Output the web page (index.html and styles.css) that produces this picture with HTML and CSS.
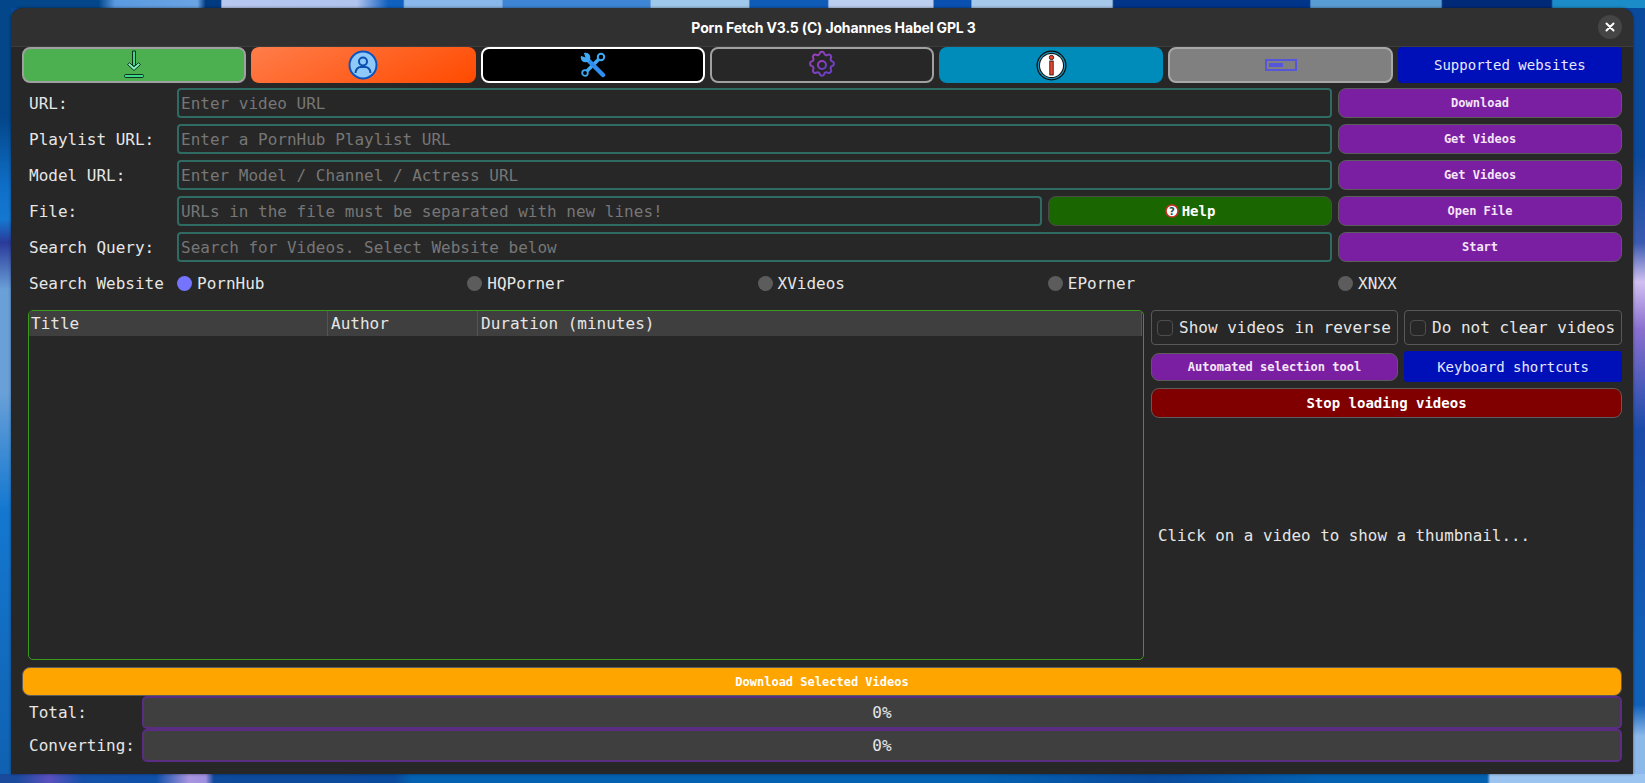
FILE: index.html

```html
<!DOCTYPE html>
<html lang="en">
<head>
    <meta charset="UTF-8">
    <title>Porn Fetch</title>
    <link rel="stylesheet" href="styles.css">
</head>
<body>
    <div class="window">
        <div class="titlebar">
            <span class="title">Porn Fetch V3.5 (C) Johannes Habel GPL 3</span>
            <span class="close">
                <svg width="10" height="10" viewBox="0 0 10 10"><path d="M1.5 1.5L8.5 8.5M8.5 1.5L1.5 8.5" stroke="#fff" stroke-width="2" stroke-linecap="round"/></svg>
            </span>
        </div>
        <div class="content">
            <div class="tabs">
                <button class="tab tab-green">
                    <svg width="24" height="30" viewBox="0 0 24 30">
                        <path d="M10.5 1h3v15h-3z" fill="#3fd98c" stroke="#10301f" stroke-width="1"/>
                        <path d="M5.5 14.5l6.5 6 6.5-6-2-1.7-4.5 3.9-4.5-3.9z" fill="#7df0b4" stroke="#10301f" stroke-width="1"/>
                        <rect x="2.5" y="24.5" width="19" height="3" rx="1.2" fill="#3fd98c" stroke="#10301f" stroke-width="1"/>
                    </svg>
                </button>
                <button class="tab tab-orange">
                    <svg width="30" height="30" viewBox="0 0 30 30">
                        <circle cx="15" cy="15" r="13.5" fill="#8ec9f9" stroke="#0b55c0" stroke-width="2"/>
                        <circle cx="15" cy="11.5" r="4" fill="none" stroke="#0b4fb0" stroke-width="2"/>
                        <path d="M7.5 23c0-4 3-6 5-6h5c2 0 5 2 5 6" fill="none" stroke="#0b4fb0" stroke-width="2"/>
                    </svg>
                </button>
                <button class="tab tab-black">
                    <svg width="26" height="26" viewBox="0 0 26 26">
                        <path d="M21 5L5 21" stroke="#3fa9f5" stroke-width="3.5"/>
                        <circle cx="21" cy="5" r="3.2" fill="#000" stroke="#3fa9f5" stroke-width="2"/>
                        <circle cx="5" cy="21" r="2.8" fill="#000" stroke="#3fa9f5" stroke-width="1.8"/>
                        <path d="M6 6L23 23" stroke="#2f8df0" stroke-width="4.5" stroke-linecap="round"/>
                        <circle cx="5.5" cy="5.5" r="4.8" fill="#3fa9f5"/>
                        <path d="M5.5 5.5L0 3.5V0h3.5z" fill="#000"/>
                    </svg>
                </button>
                <button class="tab tab-dark">
                    <svg width="32" height="32" viewBox="0 0 24 24">
                        <defs>
                            <linearGradient id="gearGrad" x1="0" y1="0" x2="1" y2="1">
                                <stop offset="0" stop-color="#a040b8"/>
                                <stop offset="1" stop-color="#6440cc"/>
                            </linearGradient>
                        </defs>
                        <path d="M10.3 3.3c.4-1.7 3-1.700 3.400 0a1.700 1.700 0 0 0 2.600 1.100c1.500-.9 3.300.8 2.400 2.400a1.700 1.700 0 0 0 1 2.500c1.700.4 1.700 3 0 3.400a1.700 1.700 0 0 0-1 2.600c.9 1.500-.9 3.300-2.400 2.400a1.700 1.700 0 0 0-2.600 1c-.4 1.700-3 1.700-3.400 0a1.700 1.700 0 0 0-2.500-1c-1.600.9-3.300-.9-2.400-2.400a1.700 1.700 0 0 0-1.100-2.600c-1.700-.4-1.700-3 0-3.400a1.700 1.700 0 0 0 1.100-2.500c-.9-1.600.8-3.300 2.400-2.400a1.700 1.700 0 0 0 2.500-1.100z" fill="none" stroke="url(#gearGrad)" stroke-width="1.500"/>
                        <circle cx="12" cy="12" r="3" fill="none" stroke="url(#gearGrad)" stroke-width="1.500"/>
                    </svg>
                </button>
                <button class="tab tab-teal">
                    <svg width="31" height="31" viewBox="0 0 31 31">
                        <circle cx="15.5" cy="15.5" r="15" fill="#0b0b0b"/>
                        <circle cx="15.5" cy="15.5" r="13.8" fill="#1d8fb5"/>
                        <circle cx="15.5" cy="15.5" r="12.5" fill="#0b0b0b"/>
                        <circle cx="15.5" cy="15.5" r="11.5" fill="#fff"/>
                        <circle cx="15.5" cy="7.5" r="2.2" fill="#e8452c" stroke="#111" stroke-width=".8"/>
                        <rect x="13.8" y="11" width="3.4" height="14" fill="#e8452c" stroke="#111" stroke-width=".8"/>
                    </svg>
                </button>
                <button class="tab tab-gray">
                    <svg width="32" height="12" viewBox="0 0 32 12">
                        <rect x="1" y="1" width="30" height="10" fill="none" stroke="#5656dc" stroke-width="2"/>
                        <rect x="4" y="4" width="14" height="4" fill="#5656dc"/>
                    </svg>
                </button>
                <button class="tab tab-blue">Supported websites</button>
            </div>

            <div class="form">
                <label>URL:</label>
                <input type="text" placeholder="Enter video URL">
                <button class="btn-purple">Download</button>

                <label>Playlist URL:</label>
                <input type="text" placeholder="Enter a PornHub Playlist URL">
                <button class="btn-purple">Get Videos</button>

                <label>Model URL:</label>
                <input type="text" placeholder="Enter Model / Channel / Actress URL">
                <button class="btn-purple">Get Videos</button>

                <label>File:</label>
                <div class="file-row">
                    <input type="text" placeholder="URLs in the file must be separated with new lines!">
                    <button class="btn-help">
                        <svg width="14" height="14" viewBox="0 0 14 14">
                            <circle cx="7" cy="7" r="6" fill="#fff" stroke="#c8322a" stroke-width="1.6"/>
                            <text x="7" y="10.5" class="help-mark">?</text>
                        </svg>
                        Help
                    </button>
                </div>
                <button class="btn-purple">Open File</button>

                <label>Search Query:</label>
                <input type="text" placeholder="Search for Videos. Select Website below">
                <button class="btn-purple">Start</button>

                <label>Search Website</label>
                <div class="radios">
                    <span class="radio"><i class="dot dot-on"></i>PornHub</span>
                    <span class="radio"><i class="dot"></i>HQPorner</span>
                    <span class="radio"><i class="dot"></i>XVideos</span>
                    <span class="radio"><i class="dot"></i>EPorner</span>
                    <span class="radio"><i class="dot"></i>XNXX</span>
                </div>
            </div>

            <div class="main">
                <div class="table">
                    <div class="table-head">
                        <span class="col-title">Title</span>
                        <span class="col-author">Author</span>
                        <span class="col-duration">Duration (minutes)</span>
                    </div>
                </div>
                <div class="side">
                    <div class="side-row">
                        <label class="check check-wide"><i class="box"></i>Show videos in reverse</label>
                        <label class="check"><i class="box"></i>Do not clear videos</label>
                    </div>
                    <div class="side-row side-row-center">
                        <button class="btn-purple btn-auto">Automated selection tool</button>
                        <button class="btn-keys">Keyboard shortcuts</button>
                    </div>
                    <button class="btn-stop">Stop loading videos</button>
                    <div class="thumb">Click on a video to show a thumbnail...</div>
                </div>
            </div>

            <button class="btn-download">Download Selected Videos</button>

            <div class="progress">
                <span>Total:</span>
                <div class="bar">0%</div>
                <span>Converting:</span>
                <div class="bar">0%</div>
            </div>
        </div>
    </div>
</body>
</html>
```

FILE: styles.css

```css
* {
    box-sizing: border-box;
}
html, body {
    height: 100%;
}
body {
    margin: 0;
    padding: 8px 12px 9px 11px;
    overflow: hidden;
    font-family: "DejaVu Sans Mono", monospace;
    font-size: 16px;
    color: #e6e6e6;
    background-color: #0a4a9c;
    background-repeat: no-repeat;
    background-size: 100% 8px, 100% 9px, 11px 100%, 12px 100%;
    background-position: 0 0, 0 100%, 0 0, 100% 0;
    background-image:
        linear-gradient(to right, #04468a 6%, #5a9ae0 7%, #6aa4e4 12%, #003a80 12.5%, #003a80 13.4%, #b8c8f0 13.5%, #b0c4ee 21.7%, #1060c0 23.6%, #1060c0 24.5%, #8ab8ea 24.6%, #8ab8ea 30.5%, #3f85d5 30.6%, #3f85d5 39.5%, #a0c8ea 39.6%, #a0c8ea 45.5%, #0f5cb8 45.6%, #0f5cb8 50.3%, #bccff0 50.4%, #bccff0 56.7%, #0a50b0 56.8%, #0a50b0 59%, #a6c8ea 59.1%, #a6c8ea 67.6%, #00358a 67.7%, #00358a 79.6%, #5a9dd5 79.7%, #5a9dd5 87.6%, #002a78 87.7%, #002a78 94.3%, #1c8cc8 94.4%),
        linear-gradient(to right, #1a4a9c 1%, #5a50c0 3%, #1450a8 5%, #1050a8 9.5%, #a894e0 11.5%, #a08fe0 12.5%, #0f4a9c 13%, #0a4a9c 24%, #0460b0 25%, #0460b0 60%, #0a4a9c 70%, #0460b0 80%, #0460b0 90.4%, #9cc4f0 90.6%),
        linear-gradient(to bottom, #04468a 15%, #0f6fc8 24%, #1478d0 28%, #2a3a9a 31%, #6aa0d8 37%, #6aa0d8 50%, #1478d0 65%, #1060b0 100%),
        linear-gradient(to bottom, #0a4a9c 20%, #3a5ab0 31%, #d0c0f0 36%, #8a70d0 42%, #1a4aa8 55%, #1060b8 84%, #1060b8 90%, #8cb8ea 94%);
}
.window {
    height: 100%;
    display: flex;
    flex-direction: column;
    background: #272727;
    border-radius: 12px 12px 0 0;
    box-shadow: 0 0 3px rgba(0,0,0,0.5);
}
.titlebar {
    height: 39px;
    flex: none;
    display: flex;
    align-items: center;
    background: #303030;
    border-bottom: 1px solid #3d3d3d;
    border-radius: 12px 12px 0 0;
    padding: 0 11px 0 0;
}
.title {
    flex: 1;
    text-align: center;
    padding-left: 58px;
    font-family: Inter, "Noto Sans", sans-serif;
    font-weight: 700;
    font-size: 14px;
    letter-spacing: -0.15px;
    color: #fff;
}
.close {
    width: 24px;
    height: 24px;
    border-radius: 50%;
    background: #454545;
    display: flex;
    align-items: center;
    justify-content: center;
}
.content {
    flex: 1;
    padding: 0 11px 11px 11px;
    display: flex;
    flex-direction: column;
}
button {
    font-family: inherit;
    color: #fff;
    cursor: pointer;
    padding: 0;
}
.tabs {
    display: grid;
    grid-template-columns: repeat(7, 1fr);
    gap: 5px;
    height: 35px;
}
.tab {
    border-radius: 8px;
    border: 2px solid #a0a0a0;
    display: flex;
    align-items: center;
    justify-content: center;
}
.tab-green { background: #4caf50; }
.tab-orange {
    border: none;
    background: linear-gradient(155deg, #ff7d4a, #ff4a00);
}
.tab-black {
    background: #000;
    border-color: #fff;
}
.tab-dark { background: #272727; }
.tab-teal {
    background: #008cba;
    border: none;
}
.tab-gray {
    background: #808080;
    border-color: #a8a8a8;
}
.tab-blue {
    background: #0010b8;
    border: none;
    border-radius: 4px;
    font-size: 14px;
    color: #e8e8ff;
}
.form {
    margin-top: 6px;
    display: grid;
    grid-template-columns: 149px 1fr 284px;
    grid-auto-rows: 30px;
    gap: 6px;
    align-items: stretch;
}
.form label {
    padding-left: 7px;
    display: flex;
    align-items: center;
}
input {
    width: 100%;
    min-width: 0;
    font-family: inherit;
    font-size: 16px;
    color: #e6e6e6;
    background: #272727;
    border: 2px solid #2f6b63;
    border-radius: 4px;
    padding: 0 2px;
    outline: none;
}
input::placeholder {
    color: #767676;
}
.btn-purple {
    background: #7b1fa2;
    border: 1px solid #5c5c5c;
    border-radius: 8px;
    font-size: 12px;
    font-weight: bold;
    color: #f4e6f8;
}
.file-row {
    display: flex;
    gap: 6px;
}
.file-row input {
    flex: none;
    width: 865px;
}
.btn-help {
    flex: 1;
    background: #1a6600;
    border: 1px solid #4a4a4a;
    border-radius: 8px;
    font-size: 14px;
    font-weight: bold;
    display: flex;
    align-items: center;
    justify-content: center;
    gap: 3px;
}
.help-mark {
    font-family: "DejaVu Sans", sans-serif;
    font-size: 10px;
    font-weight: bold;
    text-anchor: middle;
    fill: #14505a;
}
.radios {
    grid-column: span 2;
    display: grid;
    grid-template-columns: repeat(4, 290.25px) 1fr;
    align-items: center;
}
.radio {
    display: flex;
    align-items: center;
    gap: 5px;
}
.dot {
    width: 15px;
    height: 15px;
    border-radius: 50%;
    background: #5c5c5c;
}
.dot-on {
    background: #7474ff;
}
.main {
    margin-top: 12px;
    height: 350px;
    padding-left: 6px;
    display: grid;
    grid-template-columns: 1fr 471px;
    gap: 7px;
}
.table {
    border: 1px solid #3a9a1c;
    border-radius: 5px;
    padding-right: 1px;
    overflow: hidden;
}
.table-head {
    height: 25px;
    background: #3f3f3f;
    display: grid;
    grid-template-columns: 299px 150px 1fr;
    align-items: stretch;
}
.table-head span {
    display: flex;
    align-items: center;
    padding-left: 3px;
    border-right: 1px solid #555;
}
.table-head .col-title {
    padding-left: 2px;
}
.side {
    display: flex;
    flex-direction: column;
    gap: 6px;
}
.side-row {
    display: grid;
    grid-template-columns: 247px 1fr;
    gap: 6px;
}
.side-row-center {
    align-items: center;
}
.check {
    height: 35px;
    border: 1px solid #585858;
    border-radius: 4px;
    padding-left: 5px;
    display: flex;
    align-items: center;
    gap: 6px;
    white-space: nowrap;
}
.box {
    width: 16px;
    height: 16px;
    flex: none;
    border: 1px solid #4e4e4e;
    border-radius: 4px;
}
.btn-auto {
    height: 28px;
}
.btn-keys {
    height: 31px;
    background: #0010b8;
    border: none;
    border-radius: 3px;
    font-size: 14px;
    color: #e8e8ff;
}
.btn-stop {
    height: 30px;
    background: #800000;
    border: 1px solid #5c5c5c;
    border-radius: 8px;
    font-size: 14px;
    font-weight: bold;
}
.thumb {
    flex: 1;
    display: flex;
    align-items: center;
    padding: 0 0 13px 7px;
    font-size: 15.85px;
}
.btn-download {
    margin-top: 7px;
    height: 29px;
    flex: none;
    background: #ffa500;
    border: 1px solid #5c5c5c;
    border-radius: 8px;
    font-size: 12px;
    font-weight: bold;
}
.progress {
    padding-left: 7px;
    display: grid;
    grid-template-columns: 113px 1fr;
    grid-auto-rows: 33px;
    align-items: center;
}
.bar {
    height: 33px;
    background: #3f3f3f;
    border: 2px solid #5a2d82;
    border-radius: 5px;
    display: flex;
    align-items: center;
    justify-content: center;
}
```
